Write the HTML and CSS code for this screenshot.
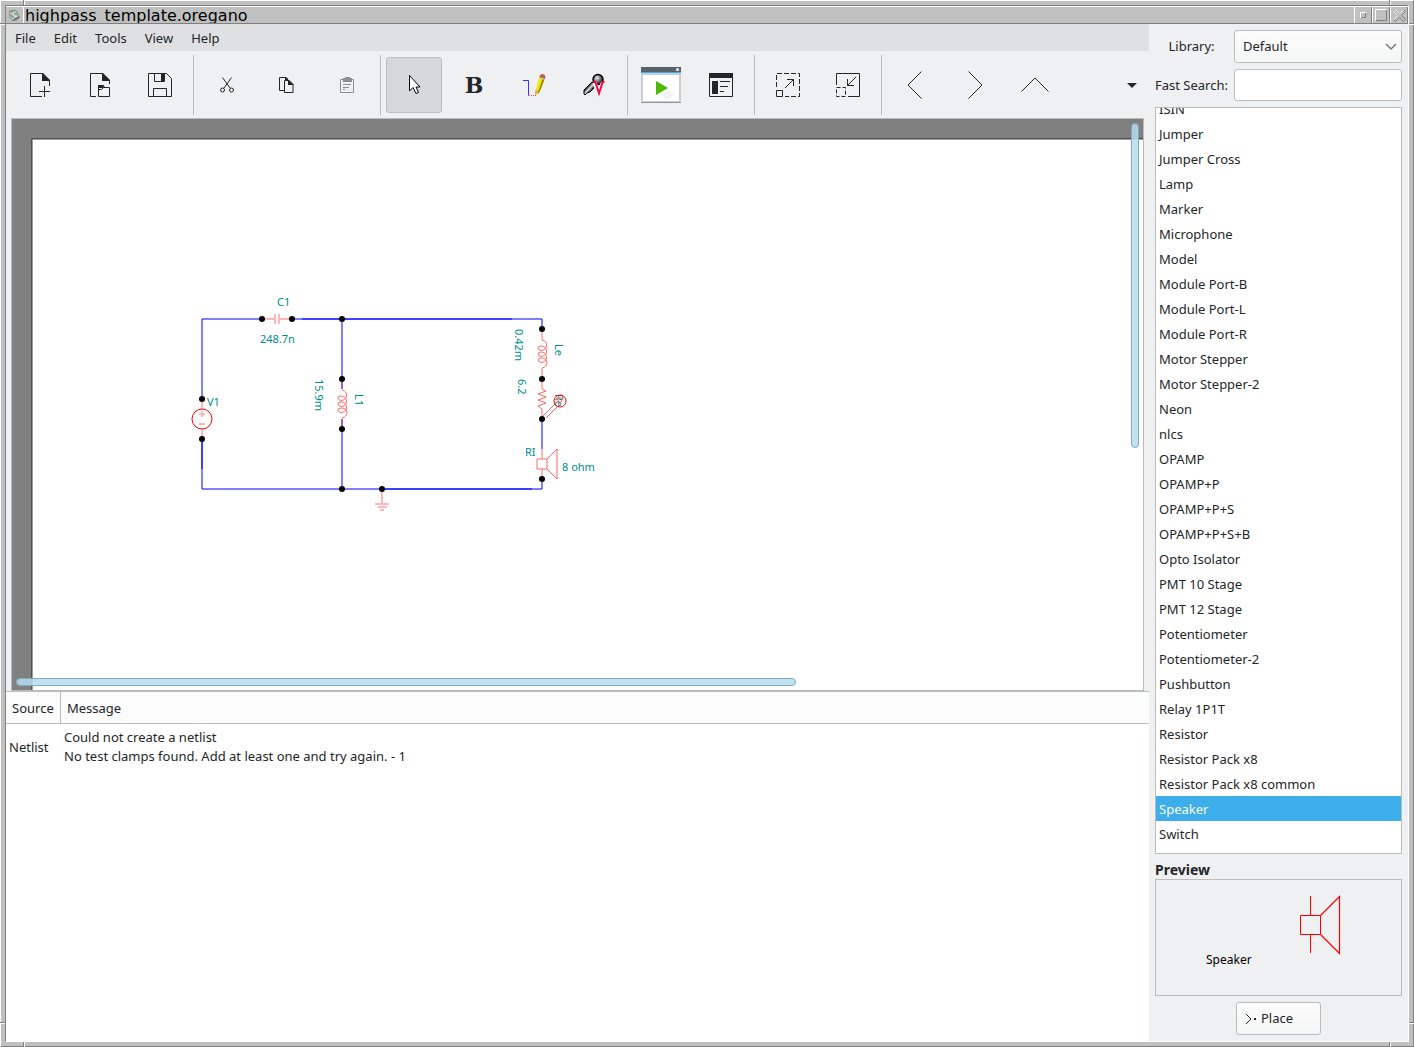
FILE: index.html
```html
<!DOCTYPE html>
<html lang="en">
<head>
<meta charset="utf-8">
<title>highpass_template.oregano</title>
<link rel="stylesheet" href="styles.css">
</head>
<body>
<div class="frame">
  <span class="notch notch-v top left"></span><span class="notch notch-v top right"></span>
  <span class="notch notch-v bottom left"></span><span class="notch notch-v bottom right"></span>
  <span class="notch notch-h top left"></span><span class="notch notch-h top right"></span>
  <span class="notch notch-h bottom left"></span><span class="notch notch-h bottom right"></span>
  <div class="window">
    <header class="titlebar">
      <svg class="app-icon" width="18" height="16" viewBox="0 0 18 16"><path d="M4 4l5-1 2 1 3 6-2 3-5 1-3-4z" fill="#ccc" stroke="#777"/><path d="M5 5l4-2M5 8l3 3M9 6l3 2" stroke="#5aaa6a" stroke-width="1.5"/><path d="M8 13l6-3" stroke="#333"/></svg>
      <h1 class="title">highpass_template.oregano</h1>
      <button class="win-btn" aria-label="Minimize"><svg width="16" height="16"><path d="M5.500 11V5.500H11" fill="none" stroke="#fff"/><path d="M10.500 6v4.500H6" fill="none" stroke="#808080"/></svg></button>
      <button class="win-btn" aria-label="Maximize"><svg width="16" height="16"><path d="M2.500 14V2.500H14" fill="none" stroke="#fff"/><path d="M13.500 3v10.500H3" fill="none" stroke="#808080"/></svg></button>
      <button class="win-btn" aria-label="Close"><svg width="16" height="16"><path d="M2.500 4.500l2-2 4 4 4-4 2 2-4 4 4 4-2 2-4-4-4 4-2-2 4-4z" fill="#c0c0c0" stroke="#808080"/><path d="M2.500 4.500l2-2 4 4 4-4M2.500 12.500l4-4-4-4" fill="none" stroke="#fff" stroke-opacity=".8"/></svg></button>
    </header>
    <div class="body">
      <main class="left">
        <nav class="menubar">
          <button>File</button><button>Edit</button><button>Tools</button><button>View</button><button>Help</button>
        </nav>
        <div class="toolbar" role="toolbar">
          <button class="tool" aria-label="New"><svg width="24" height="24"><path d="M14 23.500H2.500V.5H15M21.500 8v5" fill="none" stroke="#232629"/><path d="M14 0h1l7 7v1h-8z" fill="#232629"/><path d="M16.500 13v11M11 18.500h11" stroke="#232629"/></svg></button>
          <button class="tool" aria-label="Open"><svg width="24" height="24"><path d="M8 23.500H2.500V.5H15M21.500 8v3" fill="none" stroke="#232629"/><path d="M14 0h1l7 7v1h-8z" fill="#232629"/><path d="M10.500 12.500h5l1 2h5v9h-11zM10.500 16.500h3l2-2h2" fill="none" stroke="#232629"/><path d="M10 12h5l1 2-1 1h-5z" fill="#232629"/></svg></button>
          <button class="tool" aria-label="Save"><svg width="24" height="24"><path d="M.5.500h18l5 5v18H.5zM6.500.5v8h10v-8M5.500 23.500v-8h13v8" fill="none" stroke="#232629"/><path d="M13 1h4v7h-4z" fill="#232629"/></svg></button>
          <span class="sep"></span>
          <button class="tool" aria-label="Cut"><svg width="16" height="16"><path d="M3.500.5L11 11M12.500.5L5 11" stroke="#232629" fill="none"/><circle cx="3.500" cy="13" r="2" fill="none" stroke="#232629"/><circle cx="12.500" cy="13" r="2" fill="none" stroke="#232629"/></svg></button>
          <button class="tool" aria-label="Copy"><svg width="16" height="16"><path d="M5 13.500H.5V.5H7l2 2" fill="none" stroke="#232629"/><path d="M5.500 3.500H10l4 4v8H5.500z" fill="none" stroke="#232629"/><path d="M9 3h1l4.500 4.500V8H9zM6 0h1l2 2v1H6z" fill="#232629"/></svg></button>
          <button class="tool" aria-label="Paste" disabled><svg width="16" height="16"><path d="M1.500 2.500h13v13h-13z" fill="none" stroke="#8c8e90"/><path d="M4 1h2V0h5v1h2v4H4z" fill="#8c8e90"/><path d="M4 7.500h8M4 10.500h6M4 12.500h2" stroke="#8c8e90"/></svg></button>
          <span class="sep"></span>
          <button class="tool active" aria-label="Select" aria-pressed="true"><svg width="24" height="24"><path d="M7.500 2.500v15.500l3.500-3.500 3 6 2.500-1-2.500-5.500h4z" fill="#fff" stroke="#000"/></svg></button>
          <button class="tool bold" aria-label="Text">B</button>
          <button class="tool" aria-label="Wire"><svg width="24" height="24"><path d="M1 7.500h5.500v15" fill="none" stroke="#33f"/><path d="M7 22.500h7" stroke="#f44" stroke-dasharray="1 1"/><path d="M17.500 4l5 2-5 13-3 3-1.500-1 1-5z" fill="#f2e600"/><path d="M21 5l1.500 1-5 13-2 2z" fill="#8a7a00"/><path d="M17 4.500q1-4 4-3.500 3.500 1 2 5z" fill="#b86a50"/><path d="M17.500 4.500l5 2" stroke="#ccc"/><path d="M13.500 17l3 2-3.500 3z" fill="#d9a080"/></svg></button>
          <button class="tool" aria-label="Clamp"><svg width="24" height="24"><defs><linearGradient id="probe" x1="0" y1="0" x2="1" y2="1"><stop offset="0.300" stop-color="#000"/><stop offset="0.480" stop-color="#ddd"/><stop offset="0.650" stop-color="#000"/></linearGradient><radialGradient id="ball" cx="0.400" cy="0.350"><stop offset="0" stop-color="#eee"/><stop offset="1" stop-color="#444"/></radialGradient></defs><path d="M10 9l4 4-6 6-3 1-2 2-1-1v-4z" fill="url(#probe)" stroke="#000"/><circle cx="16" cy="6.500" r="5" fill="url(#ball)" stroke="#000" stroke-width="1.500"/><path d="M12.500 9.500l4 11 4.500-11" fill="none" stroke="#fff" stroke-width="4"/><path d="M11.500 8.500l2 1 3.500 11 3.500-11 2-1" fill="none" stroke="#ff0040" stroke-width="2"/></svg></button>
          <span class="sep"></span>
          <button class="tool" aria-label="Simulate"><svg width="40" height="36"><path d="M0 0h40v36H0z" fill="#c9ced2"/><path d="M0 0h40v5H0z" fill="#57616a"/><path d="M0 5h40v1H0z" fill="#3daee9"/><path d="M2 8h36v26H2z" fill="#fff"/><path d="M0 35h40v1H0z" fill="#8d969d"/><circle cx="36.500" cy="2.500" r="1.500" fill="#fff"/><path d="M18 27l9-5 6 6-7 5z" fill="#f2f2f2"/><path d="M15 14l12 7-12 7z" fill="#4fb800"/></svg></button>
          <button class="tool" aria-label="Netlist"><svg width="24" height="24"><path d="M.5.500h23v23H.5z" fill="none" stroke="#232629"/><path d="M0 0h24v5H0zM3 8h6v13H3z" fill="#232629"/><path d="M11 8.500h10M11 13.500h8M11 18.500h4" stroke="#232629"/></svg></button>
          <span class="sep"></span>
          <button class="tool" aria-label="Zoom in"><svg width="24" height="24"><path d="M.5 14V.5h23v23H9" fill="none" stroke="#232629" stroke-dasharray="5 2"/><path d="M.5 17.500h6v6h-6zM9 15l8.500-8.500M11 6.500h6.500V13" fill="none" stroke="#232629"/></svg></button>
          <button class="tool" aria-label="Zoom out"><svg width="24" height="24"><path d="M.5 12V.5h23v23H12" fill="none" stroke="#232629"/><path d="M.5 14.500h9v9h-9z" fill="none" stroke="#232629" stroke-dasharray="4 2"/><path d="M20 4l-8.500 8.500M11.500 6v6.500H18" fill="none" stroke="#232629"/></svg></button>
          <span class="sep"></span>
          <button class="tool" aria-label="Back"><svg width="32" height="32"><path d="M22.500 2.500L9 16l13.500 13.500" fill="none" stroke="#232629"/></svg></button>
          <button class="tool" aria-label="Forward"><svg width="32" height="32"><path d="M9.500 2.500L23 16 9.500 29.500" fill="none" stroke="#232629"/></svg></button>
          <button class="tool" aria-label="Up"><svg width="32" height="32"><path d="M2.500 22.500L16 9l13.500 13.500" fill="none" stroke="#232629"/></svg></button>
          <button class="overflow" aria-label="More"><svg width="10" height="6"><path d="M0 0h10L5 5z" fill="#232629"/></svg></button>
        </div>
        <section class="canvas">
          <svg class="schematic" width="100%" height="100%">
            <g transform="translate(-12 -119)">
              <rect x="32" y="139" width="4000" height="3000" fill="#fff" stroke="#000" stroke-opacity=".75"/>
              <g fill="none" stroke="#00f">
                <path d="M202 399V319H262M292 319H542V329M342 319V379M342 429V489M202 439V489H542V479M542 419V449"/>
                <path d="M302 319H512M382 489H532M202 439V469"/>
              </g>
              <g fill="none" stroke="#ffb6b6" stroke-width="2">
                <path d="M262 319H275M279 319H292M275 314V324M279 314V324M202 399V409M202 429V439M199 414h6M202 411v6M199 424h6M382 489V504M375 504h14M378 507h9M380 510h4M542 329V340M542 368V389M542 409V419M542 449V459M542 469V479"/>
                <path d="M342 379V389M342 419V429" stroke="#9a60c8"/>
              </g>
              <g fill="none" stroke="#ff6868">
                <path id="coil" d="M342 390Q347 391 346.500 396Q346 400 341 400.500Q338 400 338 398Q338 396 341 396Q346.500 396 346.500 402Q346 406 341 406.500Q338 406 338 404Q338 402 341 402Q346.500 402 346.500 408Q346 412 341 412.500Q338 412 338 410Q338 408 341 408Q346.500 408 347 412Q347 417 342 418"/>
                <use href="#coil" x="200" y="-50"/>
                <path d="M542 389l4 2-8 3 8 3-8 3 8 3-8 3 4 3M537 459h10v10h-10zM547 459l10-10v30l-10-10M543 416l13-13M546 418l12-12"/>
              </g>
              <circle cx="202" cy="419" r="10" fill="none" stroke="#f00"/>
              <g class="part-text">
                <text x="277" y="306">C1</text><text x="260" y="343">248.7n</text><text x="207" y="406">V1</text>
                <text x="525" y="456">RI</text><text x="562" y="471">8 ohm</text>
                <text transform="translate(315 379) rotate(90)">15.9m</text><text transform="translate(355 394) rotate(90)">L1</text>
                <text transform="translate(515 329) rotate(90)">0.42m</text><text transform="translate(555 344) rotate(90)">Le</text>
                <text transform="translate(518 379) rotate(90)">6.2</text><text transform="translate(555 394) rotate(90)">Re</text>
              </g>
              <circle cx="560" cy="401" r="6" fill="none" stroke="#f00"/>
              <path d="M557 398l3 6 3-6z" fill="none" stroke="#f66"/>
              <g fill="#000"><circle cx="262" cy="319" r="3"/><circle cx="292" cy="319" r="3"/><circle cx="342" cy="319" r="3"/><circle cx="342" cy="379" r="3"/><circle cx="342" cy="429" r="3"/><circle cx="342" cy="489" r="3"/><circle cx="382" cy="489" r="3"/><circle cx="202" cy="399" r="3"/><circle cx="202" cy="439" r="3"/><circle cx="542" cy="329" r="3"/><circle cx="542" cy="379" r="3"/><circle cx="542" cy="419" r="3"/><circle cx="542" cy="479" r="3"/></g>
            </g>
          </svg>
          <span class="thumb thumb-v"></span><span class="thumb thumb-h"></span>
        </section>
        <section class="messages">
          <table>
            <thead><tr><th class="source">Source</th><th>Message</th></tr></thead>
            <tbody><tr><td>Netlist</td><td>Could not create a netlist<br>No test clamps found. Add at least one and try again. - 1</td></tr></tbody>
          </table>
        </section>
      </main>
      <aside class="panel">
        <form class="filters">
          <label for="library">Library:</label>
          <span class="select"><select id="library"><option>Default</option></select><svg width="12" height="8"><path d="M1 1l5 5 5-5" fill="none" stroke="#77797b" stroke-width="1.500"/></svg></span>
          <label for="search">Fast Search:</label>
          <input id="search" type="text">
        </form>
        <ul class="parts" role="listbox" aria-label="Parts">
          <li role="option">ISIN</li><li role="option">Jumper</li><li role="option">Jumper Cross</li><li role="option">Lamp</li><li role="option">Marker</li><li role="option">Microphone</li><li role="option">Model</li><li role="option">Module Port-B</li><li role="option">Module Port-L</li><li role="option">Module Port-R</li><li role="option">Motor Stepper</li><li role="option">Motor Stepper-2</li><li role="option">Neon</li><li role="option">nlcs</li><li role="option">OPAMP</li><li role="option">OPAMP+P</li><li role="option">OPAMP+P+S</li><li role="option">OPAMP+P+S+B</li><li role="option">Opto Isolator</li><li role="option">PMT 10 Stage</li><li role="option">PMT 12 Stage</li><li role="option">Potentiometer</li><li role="option">Potentiometer-2</li><li role="option">Pushbutton</li><li role="option">Relay 1P1T</li><li role="option">Resistor</li><li role="option">Resistor Pack x8</li><li role="option">Resistor Pack x8 common</li><li role="option" aria-selected="true" class="selected">Speaker</li><li role="option">Switch</li>
        </ul>
        <h2 class="preview-title">Preview</h2>
        <div class="preview">
          <svg width="245" height="115"><g fill="none" stroke="#f00"><path d="M154.500 16v19M154.500 54v19M144.500 35.500h20v19h-20z"/><path d="M164.500 35.500l19-19v57l-19-19" stroke-width="1.200"/></g><text x="50" y="84">Speaker</text></svg>
        </div>
        <button class="place"><svg width="12" height="14"><path d="M1 2l5 5-5 5" fill="none" stroke="#232629"/><path d="M9 6h2v2H9z" fill="#232629"/></svg>Place</button>
      </aside>
    </div>
  </div>
</div>
</body>
</html>
```
FILE: styles.css
```css
* { box-sizing: border-box; }
body { margin: 0; font: 13px/19px "Noto Sans", sans-serif; color: #232629; }
button, input, select { font: inherit; color: inherit; }
button { border: 0; background: none; padding: 0; }

/* Window frame */
.frame { position: relative; display: flex; height: 100vh; min-height: 700px; padding: 4px; background: #c0c0c0; border: 1px solid; border-color: #fff #808080 #808080 #fff; }
.window { flex: 1; min-width: 0; display: flex; flex-direction: column; border: 1px solid; border-color: #808080 #fff #fff #808080; background: #eff0f1; }
.notch { position: absolute; }
.notch-v { width: 2px; height: 5px; border-left: 1px solid #808080; border-right: 1px solid #fff; }
.notch-h { height: 2px; width: 5px; border-top: 1px solid #808080; border-bottom: 1px solid #fff; }
.notch-v.top { top: -1px; }
.notch-v.bottom { bottom: -1px; }
.notch-v.left { left: 22px; }
.notch-v.right { right: 22px; }
.notch-h.top { top: 22px; }
.notch-h.bottom { bottom: 22px; }
.notch-h.left { left: -1px; }
.notch-h.right { right: -1px; }
.titlebar { flex: none; height: 18px; display: flex; overflow: hidden; background: #c0c0c0; border-top: 1px solid #fff; border-bottom: 1px solid #808080; }
.app-icon { flex: none; border-right: 1px solid #fff; }
.title { flex: 1; margin: 0; padding-left: 1px; font: 16px/18px "DejaVu Sans", sans-serif; color: #000; }
.win-btn { width: 18px; height: 16px; border-left: 1px solid #fff; border-right: 1px solid #808080; }
.win-btn svg { display: block; }

.body { flex: 1; min-height: 0; display: flex; }
.left { flex: 1; min-width: 0; display: flex; flex-direction: column; }

/* Menu and toolbar */
.menubar { height: 27px; flex: none; display: flex; gap: 18px; padding: 1px 0 0 9px; background: #dee0e2; }
.toolbar { flex: none; height: 67px; display: flex; align-items: center; gap: 4px; padding: 0 7px 0 6px; }
.tool { width: 56px; height: 56px; display: flex; align-items: center; justify-content: center; border-radius: 3px; }
.tool.active { background: #d5d7d9; border: 1px solid #bbbdbf; }
.tool.bold { font: bold 22px/24px "DejaVu Serif", serif; }
.sep { width: 1px; height: 60px; margin: 0 1px; background: #babcbe; }
.overflow { margin-left: auto; width: 20px; height: 56px; }

/* Schematic */
.canvas { flex: 1; min-height: 0; position: relative; margin: 0 5px; overflow: hidden; background: #808080; border: 1px solid #b9bbbc; }
.schematic { display: block; }
.part-text { font-size: 11px; fill: #008b8b; }
.thumb { position: absolute; border: 1px solid #86a8ba; border-radius: 4px; background: rgba(184, 221, 239, .85); }
.thumb-v { right: 4px; top: 4px; width: 8px; height: 57%; }
.thumb-h { left: 4px; bottom: 4px; height: 8px; width: 69%; }

/* Messages */
.messages { flex: 0 0 350px; background: #fff; border-top: 1px solid #babcbe; }
.messages table { width: 100%; border-collapse: separate; border-spacing: 0; }
.messages th { height: 32px; padding: 1px 6px 0; font-weight: normal; text-align: left; background: #fcfcfc; border-bottom: 1px solid #babcbe; }
.messages .source { width: 55px; border-right: 1px solid #babcbe; }
.messages td { padding: 4px 3px 3px; }

/* Parts panel */
.panel { flex: 0 0 259px; min-width: 0; min-height: 0; display: flex; flex-direction: column; padding: 6px; }
.filters { display: grid; grid-template-columns: minmax(0, 1fr) 168px; grid-template-rows: 33px 32px; gap: 6px; align-items: center; margin-bottom: 6px; text-align: center; white-space: nowrap; }
.filters select, .filters input { width: 100%; height: 100%; border: 1px solid #babcbe; border-radius: 3px; padding: 0 8px; outline: 0; }
.filters input { background: #fff; }
.filters select { appearance: none; background: linear-gradient(#fcfcfc, #f4f5f5); }
.select { position: relative; height: 100%; }
.select svg { position: absolute; right: 5px; top: 13px; pointer-events: none; }
.parts { flex: 1; min-height: 0; display: flex; flex-direction: column; justify-content: flex-end; margin: 0; padding: 0 0 7px; overflow: hidden; list-style: none; background: #fff; border: 1px solid #babcbe; }
.parts li { flex: none; height: 25px; padding: 4px 3px 2px; }
.parts .selected { background: #3daee9; color: #fcfcfc; }
.preview-title { margin: 6px 0 0; font: bold 14px/19px "Noto Sans", sans-serif; }
.preview { flex: none; height: 117px; border: 1px solid #babcbe; }
.preview svg { display: block; }
.preview text { font-size: 12px; fill: #000; }
.place { align-self: center; flex: none; display: flex; align-items: center; gap: 4px; width: 85px; height: 33px; margin-top: 6px; padding-left: 8px; border: 1px solid #babcbe; border-radius: 3px; background: linear-gradient(#fcfcfc, #f4f5f5); }
```
